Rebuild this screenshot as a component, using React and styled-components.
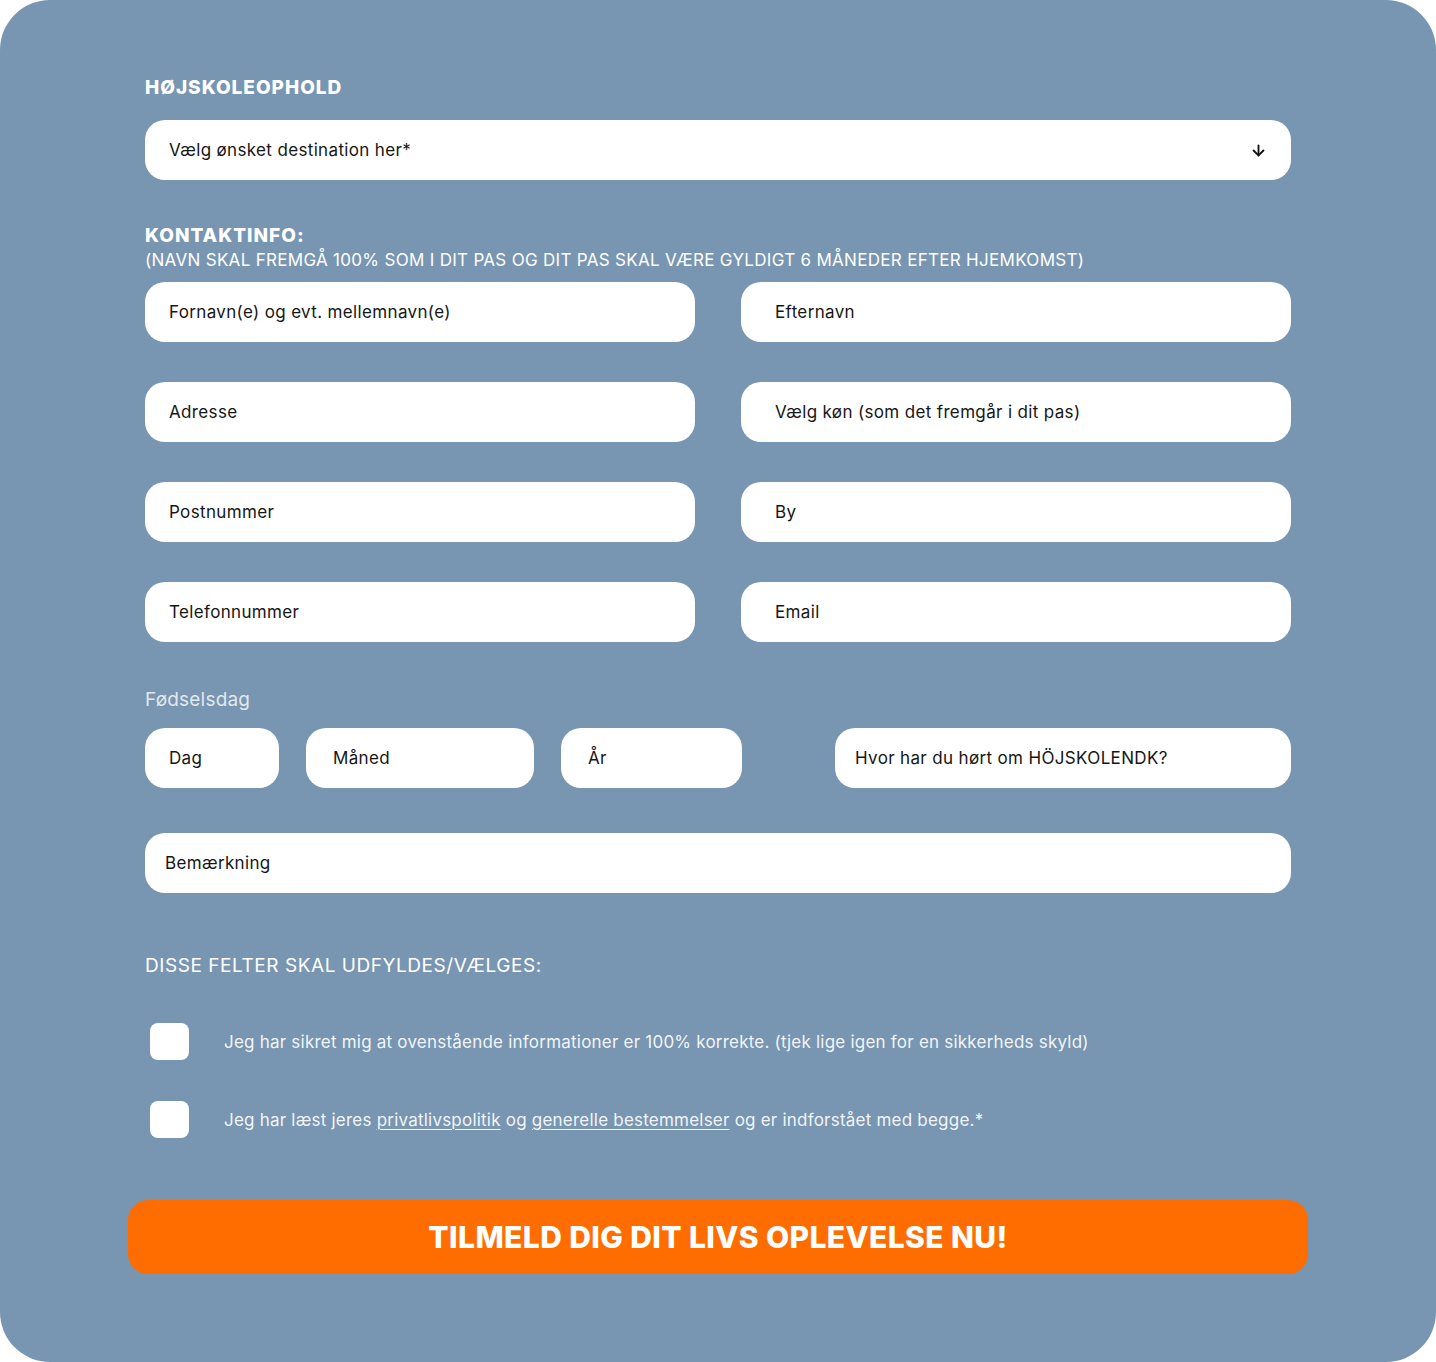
import React from "react";
import styled, { createGlobalStyle } from "styled-components";
import { ArrowDown } from "lucide-react";

const GlobalStyle = createGlobalStyle`
  body {
    margin: 0;
    background: #ffffff;
    font-family: "Inter", "Noto Sans", sans-serif;
  }
`;

const Card = styled.div`
  background: #7896b2;
  border-radius: 50px;
  min-height: 1362px;
  box-sizing: border-box;
  padding: 77px 145px 88px;
  color: #ffffff;
`;

const Heading = styled.div`
  font-size: 19px;
  line-height: 22px;
  font-weight: 800;
  letter-spacing: 1px;
  text-transform: uppercase;
  margin-bottom: ${(p) => p.$mb || 0}px;
`;

const SubHeading = styled.div`
  font-size: 17px;
  line-height: 22px;
  letter-spacing: 0.3px;
  text-transform: uppercase;
  margin-top: 2px;
  margin-bottom: 11px;
`;

const Field = styled.div`
  background: #ffffff;
  border-radius: 20px;
  height: 60px;
  box-sizing: border-box;
  padding-left: ${(p) => p.$pad || 24}px;
  padding-right: 24px;
  display: flex;
  align-items: center;
  justify-content: space-between;
  color: #161616;
  font-size: 17px;
  letter-spacing: 0.35px;
  width: ${(p) => (p.$w ? p.$w + "px" : "auto")};
  flex-shrink: 0;
`;

const Grid = styled.div`
  display: grid;
  grid-template-columns: 550px 550px;
  column-gap: 46px;
  row-gap: 40px;
`;

const Label = styled.div`
  font-size: 19px;
  line-height: 22px;
  letter-spacing: 0.2px;
  color: rgba(255, 255, 255, 0.8);
  margin-top: 47px;
  margin-bottom: 17px;
`;

const BirthRow = styled.div`
  display: flex;
  gap: 27px;
  margin-bottom: 45px;
`;

const Spacer = styled.div`
  width: 66px;
`;

const SectionTitle = styled.div`
  font-size: 19px;
  line-height: 22px;
  letter-spacing: 0.55px;
  text-transform: uppercase;
  margin-top: 62px;
  margin-bottom: 46px;
`;

const CheckRow = styled.label`
  display: flex;
  align-items: center;
  gap: 35px;
  padding-left: 5px;
  margin-bottom: ${(p) => p.$mb || 0}px;
  font-size: 17px;
  color: rgba(255, 255, 255, 0.92);
  letter-spacing: 0.22px;
`;

const Box = styled.span`
  width: 39px;
  height: 37px;
  border-radius: 8px;
  background: #ffffff;
  flex-shrink: 0;
`;

const Link = styled.a`
  color: inherit;
  text-decoration: underline;
  text-underline-offset: 3px;
  text-decoration-thickness: 1px;
`;

const Submit = styled.button`
  display: block;
  width: calc(100% + 34px);
  margin: 62px -17px 0;
  height: 74px;
  border: 0;
  border-radius: 20px;
  background: #ff6d00;
  color: #ffffff;
  font-family: "Inter", "Noto Sans", sans-serif;
  font-size: 30px;
  font-weight: 800;
  letter-spacing: 0.4px;
  text-transform: uppercase;
`;

export default function App() {
  const contact = [
    ["Fornavn(e) og evt. mellemnavn(e)", 24],
    ["Efternavn", 34],
    ["Adresse", 24],
    ["Vælg køn (som det fremgår i dit pas)", 34],
    ["Postnummer", 24],
    ["By", 34],
    ["Telefonnummer", 24],
    ["Email", 34],
  ];

  return (
    <>
      <GlobalStyle />
      <Card>
        <Heading $mb={21}>Højskoleophold</Heading>
        <Field>
          <span>Vælg ønsket destination her*</span>
          <ArrowDown size={17} strokeWidth={2.6} color="#111" />
        </Field>

        <Heading style={{ marginTop: 45 }}>Kontaktinfo:</Heading>
        <SubHeading>
          (Navn skal fremgå 100% som i dit pas og dit pas skal være gyldigt 6
          måneder efter hjemkomst)
        </SubHeading>
        <Grid>
          {contact.map(([text, pad]) => (
            <Field key={text} $pad={pad}>
              {text}
            </Field>
          ))}
        </Grid>

        <Label>Fødselsdag</Label>
        <BirthRow>
          <Field $w={134}>Dag</Field>
          <Field $w={228} $pad={27}>
            Måned
          </Field>
          <Field $w={181} $pad={27}>
            År
          </Field>
          <Spacer />
          <Field $w={456} $pad={20}>
            Hvor har du hørt om HÖJSKOLENDK?
          </Field>
        </BirthRow>

        <Field $pad={20}>Bemærkning</Field>

        <SectionTitle>Disse felter skal udfyldes/vælges:</SectionTitle>
        <CheckRow $mb={41}>
          <Box />
          Jeg har sikret mig at ovenstående informationer er 100% korrekte.
          (tjek lige igen for en sikkerheds skyld)
        </CheckRow>
        <CheckRow>
          <Box />
          <span>
            Jeg har læst jeres <Link>privatlivspolitik</Link> og{" "}
            <Link>generelle bestemmelser</Link> og er indforstået med begge.*
          </span>
        </CheckRow>

        <Submit>Tilmeld dig dit livs oplevelse nu!</Submit>
      </Card>
    </>
  );
}
